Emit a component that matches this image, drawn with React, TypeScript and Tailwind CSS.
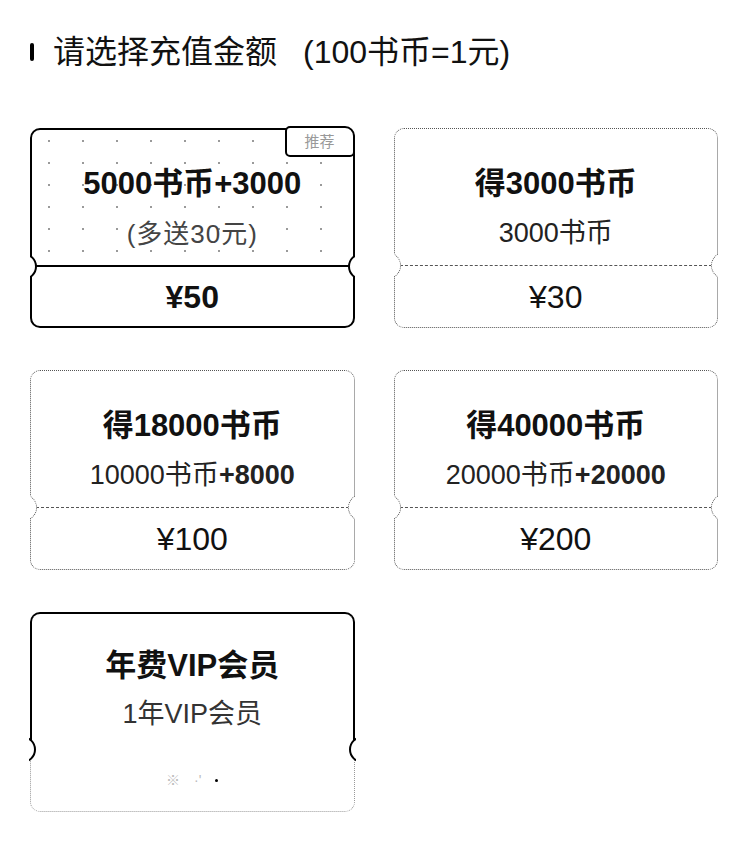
import React from "react";

const FONT = { fontFamily: '"Liberation Sans", "Noto Sans CJK SC", sans-serif' };

function Notches({ solid }: { solid?: boolean }) {
  const ring = solid ? "border-2 border-solid border-black" : "border border-dotted border-[#555]";
  const off = solid ? "left-[-2px]" : "left-[-1px]";
  const offR = solid ? "right-[-2px]" : "right-[-1px]";
  return (
    <>
      <div className={`absolute ${off} top-[123px] w-[8px] h-[27px] overflow-hidden`}>
        <div className={`absolute left-[-20px] top-0 w-[27px] h-[27px] rounded-full bg-white ${ring}`} />
      </div>
      <div className={`absolute ${offR} top-[123px] w-[8px] h-[27px] overflow-hidden`}>
        <div className={`absolute right-[-20px] top-0 w-[27px] h-[27px] rounded-full bg-white ${ring}`} />
      </div>
    </>
  );
}

type CardProps = {
  title: React.ReactNode;
  subtitle: React.ReactNode;
  price?: React.ReactNode;
  selected?: boolean;
  vip?: boolean;
};

function Card({ title, subtitle, price, selected, vip }: CardProps) {
  if (selected) {
    return (
      <div className="relative h-[200px] flex flex-col rounded-[10px] border-2 border-black bg-white">
        <div className="h-[135px] flex flex-col items-center pt-[36px] bg-[radial-gradient(circle,#9a9a9a_0.8px,transparent_1.2px)] bg-[length:34px_22px] rounded-t-[8px]">
          <div className="text-[31px] leading-[36px] font-bold text-[#111]">{title}</div>
          <div className="mt-[16px] text-[26px] leading-[32px] text-[#444] tracking-[1px]">{subtitle}</div>
        </div>
        <div className="flex-1 border-t-2 border-black flex items-center justify-center">
          <span className="text-[32px] leading-none font-bold text-[#111]">{price}</span>
        </div>
        <Notches solid />
        <div className="absolute top-[-4px] right-[-2px] w-[70px] h-[31px] bg-white border-2 border-black rounded-[5px] rounded-tr-[10px] flex items-center justify-center">
          <span className="text-[15px] leading-none text-[#999]">推荐</span>
        </div>
      </div>
    );
  }
  if (vip) {
    return (
      <div className="relative h-[200px] flex flex-col">
        <div className="h-[137px] flex flex-col items-center pt-[34px] border-2 border-b-0 border-black rounded-t-[10px]">
          <div className="text-[31px] leading-[36px] font-bold text-[#111]">{title}</div>
          <div className="mt-[14px] text-[27px] leading-[32px] text-[#333]">{subtitle}</div>
        </div>
        <div className="flex-1 border border-t-0 border-dotted border-[#999] rounded-b-[10px] flex items-center justify-center gap-[14px]">
          <span className="text-[14px] text-[#bbb]">※</span>
          <span className="text-[14px] text-[#bbb]">·'</span>
          <span className="w-[3px] h-[3px] rounded-full bg-black" />
        </div>
        <div className="absolute left-[-1px] top-[124px] w-[8px] h-[27px] overflow-hidden">
          <div className="absolute left-[-20px] top-0 w-[27px] h-[27px] rounded-full bg-white border-2 border-black" />
        </div>
        <div className="absolute right-[-1px] top-[124px] w-[8px] h-[27px] overflow-hidden">
          <div className="absolute right-[-20px] top-0 w-[27px] h-[27px] rounded-full bg-white border-2 border-black" />
        </div>
      </div>
    );
  }
  return (
    <div className="relative h-[200px] flex flex-col rounded-[10px] border border-dotted border-[#555] bg-white">
      <div className="h-[136px] flex flex-col items-center pt-[37px]">
        <div className="text-[31px] leading-[36px] font-bold text-[#111]">{title}</div>
        <div className="mt-[15px] text-[27px] leading-[32px] text-[#222]">{subtitle}</div>
      </div>
      <div className="flex-1 border-t border-dashed border-[#555] flex items-center justify-center">
        <span className="text-[32px] leading-none text-[#111]">{price}</span>
      </div>
      <Notches />
    </div>
  );
}

export default function App() {
  return (
    <div className="min-h-[867px] w-[748px] bg-white text-[#111]" style={FONT}>
      <div className="px-[30px] pt-[34px]">
        <div className="flex items-center h-[36px]">
          <div className="w-[4px] h-[18px] rounded-full bg-black" />
          <span className="ml-[19px] text-[32px] leading-[36px] text-[#111]">请选择充值金额</span>
          <span className="ml-[26px] text-[32px] leading-[36px] text-[#111]">(100书币=1元)</span>
        </div>
        <div className="mt-[58px] grid grid-cols-2 gap-x-[39px] gap-y-[42px]">
          <Card selected title="5000书币+3000" subtitle="(多送30元)" price="¥50" />
          <Card title="得3000书币" subtitle="3000书币" price="¥30" />
          <Card
            title="得18000书币"
            subtitle={<span>10000书币<span className="font-bold">+8000</span></span>}
            price="¥100"
          />
          <Card
            title="得40000书币"
            subtitle={<span>20000书币<span className="font-bold">+20000</span></span>}
            price="¥200"
          />
          <Card vip title="年费VIP会员" subtitle="1年VIP会员" />
        </div>
      </div>
    </div>
  );
}
